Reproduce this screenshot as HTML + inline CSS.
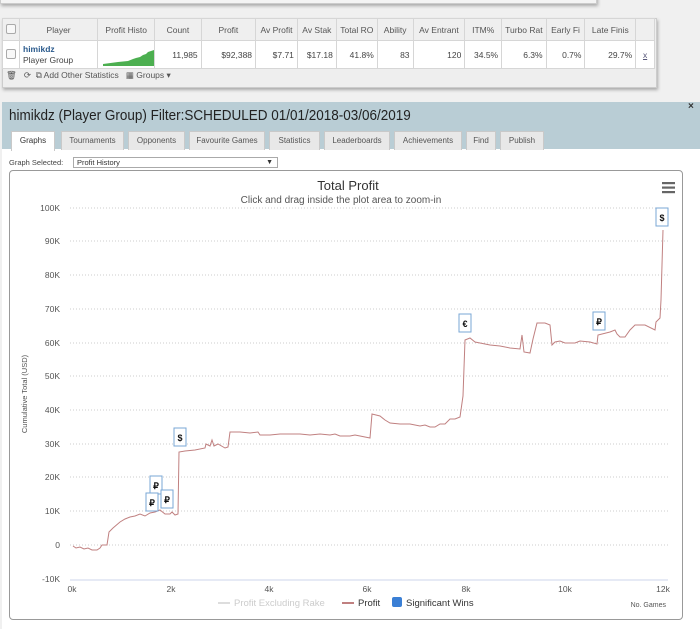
<!DOCTYPE html>
<html><head><meta charset="utf-8"><style>
*{box-sizing:border-box;margin:0;padding:0}
body{width:700px;height:629px;background:#f0f0f0;font-family:"Liberation Sans",sans-serif;position:relative;overflow:hidden;font-size:9px;color:#333}
.abs{position:absolute}
table{border-collapse:collapse;position:absolute;left:2px;top:18px;width:653px;background:#fff;font-size:8.5px}
td,th{border:1px solid #d6d6d6;padding:0 3px;white-space:nowrap;overflow:hidden}
th{height:22px;background:#efefef;font-weight:normal;color:#555;text-align:center}
td{height:25px;text-align:right;color:#444}
.cb{display:inline-block;width:10px;height:10px;border:1px solid #aaa;border-radius:2px;background:#f8f8f8}
.tab{position:absolute;top:131px;height:19px;background:#e8e8e8;border:1px solid #c9c9c9;border-bottom:none;font-size:8px;color:#555;text-align:center;line-height:18px}
</style></head><body>
<div class="abs" style="left:0;top:-6px;width:597px;height:10px;background:#f4f4f4;border:1px solid #ccc;box-shadow:1px 2px 3px #aaa"></div>
<div class="abs" style="left:2px;top:18px;width:655px;height:70px;background:#eee;box-shadow:1px 2px 3px #aaa;border:1px solid #ccc"></div>
<table>
<tr><th style="width:16px"><span class="cb"></span></th><th style="width:79px">Player</th><th style="width:56px">Profit Histo</th><th style="width:47px">Count</th><th style="width:55px">Profit</th><th style="width:42px">Av Profit</th><th style="width:39px">Av Stak</th><th style="width:41px">Total RO</th><th style="width:36px">Ability</th><th style="width:52px">Av Entrant</th><th style="width:37px">ITM%</th><th style="width:44px">Turbo Rat</th><th style="width:39px">Early Fi</th><th style="width:51px">Late Finis</th><th style="width:19px"></th></tr>
<tr><td style="text-align:center"><span class="cb"></span></td><td style="text-align:left;line-height:11px"><b style="color:#2a5a8c">himikdz</b><br>Player Group</td><td style="padding:0"><svg width="56" height="25"><path d="M5 23 L20 21 L30 20 L35 18 L38 17 L42 16 L45 14 L48 13 L50 11 L53 10 L56 9 L56 25 L5 25Z" fill="#4caf50"/></svg></td><td>11,985</td><td>$92,388</td><td>$7.71</td><td>$17.18</td><td>41.8%</td><td>83</td><td>120</td><td>34.5%</td><td>6.3%</td><td>0.7%</td><td>29.7%</td><td style="text-align:center;color:#557"><u>x</u></td></tr>
</table>
<div class="abs" style="left:6px;top:70px;font-size:8.5px;color:#555">🗑&nbsp;&nbsp; ⟳ &nbsp;⧉ Add Other Statistics &nbsp;&nbsp;▦ Groups ▾</div>

<div class="abs" style="left:2px;top:102px;width:698px;height:527px;background:#b9cdd5"></div>
<div class="abs" style="left:9px;top:108px;font-size:14.5px;color:#222;transform:scaleX(0.93);transform-origin:left top;white-space:nowrap">himikdz (Player Group) Filter:SCHEDULED 01/01/2018-03/06/2019</div>
<div class="abs" style="left:688px;top:101px;font-size:10px;font-weight:bold">×</div>
<div class="abs" style="left:2px;top:149px;width:698px;height:480px;background:#fff"></div>
<div class="tab" style="left:11px;width:44px;background:#fff;color:#333;height:20px">Graphs</div>
<div class="tab" style="left:61px;width:63px">Tournaments</div>
<div class="tab" style="left:128px;width:57px">Opponents</div>
<div class="tab" style="left:189px;width:76px">Favourite Games</div>
<div class="tab" style="left:269px;width:51px">Statistics</div>
<div class="tab" style="left:324px;width:66px">Leaderboards</div>
<div class="tab" style="left:394px;width:68px">Achievements</div>
<div class="tab" style="left:466px;width:30px">Find</div>
<div class="tab" style="left:500px;width:44px">Publish</div>
<div class="abs" style="left:9px;top:158px;font-size:7.5px;color:#444">Graph Selected:</div>
<div class="abs" style="left:73px;top:157px;width:205px;height:11px;border:1px solid #aaa;font-size:7.5px;padding-left:3px;line-height:10px;background:#fff">Profit History<span style="position:absolute;right:4px;font-size:7px">▼</span></div>
<div class="abs" style="left:9px;top:170px;width:674px;height:450px;border:1px solid #999;border-radius:4px;background:#fff"></div>
<svg class="abs" style="left:0;top:0" width="700" height="629" font-family="Liberation Sans, sans-serif">
<text x="348" y="190" font-size="13" fill="#333" text-anchor="middle">Total Profit</text>
<text x="341" y="203" font-size="10" fill="#555" text-anchor="middle">Click and drag inside the plot area to zoom-in</text>
<g fill="#666"><rect x="662" y="182" width="13" height="2.2"/><rect x="662" y="186.5" width="13" height="2.2"/><rect x="662" y="191" width="13" height="2.2"/></g>
<g stroke="#ccc" stroke-dasharray="1,2" stroke-width="1">
<line x1="70" x2="668" y1="208" y2="208"/><line x1="70" x2="668" y1="241" y2="241"/><line x1="70" x2="668" y1="275" y2="275"/><line x1="70" x2="668" y1="309" y2="309"/><line x1="70" x2="668" y1="343" y2="343"/><line x1="70" x2="668" y1="376" y2="376"/><line x1="70" x2="668" y1="410" y2="410"/><line x1="70" x2="668" y1="444" y2="444"/><line x1="70" x2="668" y1="477" y2="477"/><line x1="70" x2="668" y1="511" y2="511"/><line x1="70" x2="668" y1="545" y2="545"/></g>
<line x1="70" x2="668" y1="580" y2="580" stroke="#ccd6eb"/>
<g font-size="8.5" fill="#555" text-anchor="end">
<text x="60" y="211">100K</text><text x="60" y="244">90K</text><text x="60" y="278">80K</text><text x="60" y="312">70K</text><text x="60" y="346">60K</text><text x="60" y="379">50K</text><text x="60" y="413">40K</text><text x="60" y="447">30K</text><text x="60" y="480">20K</text><text x="60" y="514">10K</text><text x="60" y="548">0</text><text x="60" y="582">-10K</text></g>
<g font-size="8.5" fill="#555" text-anchor="middle">
<text x="72" y="592">0k</text><text x="171" y="592">2k</text><text x="269" y="592">4k</text><text x="367" y="592">6k</text><text x="466" y="592">8k</text><text x="565" y="592">10k</text><text x="663" y="592">12k</text></g>
<text transform="translate(27,394) rotate(-90)" font-size="7.5" fill="#555" text-anchor="middle">Cumulative Total (USD)</text>
<polyline fill="none" stroke="#c08080" stroke-width="1" points="73,546 76,548 80,547 84,549 88,548 92,550 97,550 100,548 102,545 107,545 109,532 113,528 120,522 125,519 130,517 135,516 140,514 145,516 150,513 155,512 160,510 165,514 170,514 172,512 175,515 178,514 179,452 185,451 195,450 205,448 206,444 210,446 212,440 214,446 218,444 225,448 228,447 230,432 240,432 250,433 258,432 260,435 270,435 280,434 290,434 300,434 310,435 320,434 330,435 335,434 340,436 350,436 355,435 360,436 370,438 372,414 380,416 385,420 390,423 400,424 410,424 420,426 425,425 430,427 435,427 440,424 445,424 450,419 455,419 460,417 463,396 465,340 470,338 475,342 480,343 490,345 500,346 510,348 520,349 522,335 524,352 530,353 533,339 537,323 545,323 550,325 552,345 555,342 560,341 565,343 575,343 580,341 590,342 597,344 598,335 610,332 615,330 617,334 620,337 625,337 630,330 635,325 645,325 655,330 656,322 660,318 661,300 663,230"/>
<g fill="#fff" stroke="#7aa7d6" stroke-width="1">
<rect x="656" y="208" width="12" height="18"/><rect x="174" y="428" width="12" height="18"/><rect x="150" y="476" width="12" height="18"/><rect x="146" y="493" width="12" height="18"/><rect x="161" y="490" width="12" height="18"/><rect x="459" y="314" width="12" height="18"/><rect x="593" y="312" width="12" height="18"/></g>
<g font-size="9" font-weight="bold" fill="#111" text-anchor="middle">
<text x="662" y="221">$</text><text x="180" y="441">$</text><text x="156" y="489">₽</text><text x="152" y="506">₽</text><text x="167" y="503">₽</text><text x="465" y="327">€</text><text x="599" y="325">₽</text></g>
<line x1="218" x2="230" y1="603" y2="603" stroke="#ddd" stroke-width="2"/>
<text x="234" y="606" font-size="9.5" fill="#ccc">Profit Excluding Rake</text>
<line x1="342" x2="354" y1="603" y2="603" stroke="#c08080" stroke-width="2"/>
<text x="358" y="606" font-size="9.5" fill="#333">Profit</text>
<rect x="392" y="597" width="10" height="10" rx="2" fill="#3a7fd5"/>
<text x="406" y="606" font-size="9.5" fill="#333">Significant Wins</text>
<text x="666" y="607" font-size="7" fill="#555" text-anchor="end">No. Games</text>
</svg>
</body></html>
